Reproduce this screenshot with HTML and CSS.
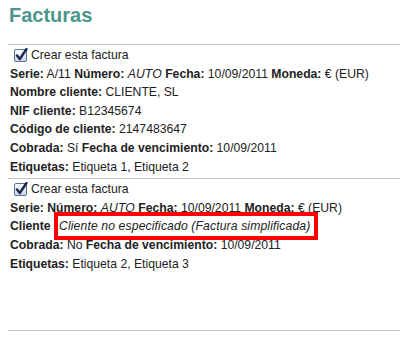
FILE: index.html
```html
<!DOCTYPE html>
<html>
<head>
<meta charset="utf-8">
<link rel="stylesheet" href="styles.css">
</head>
<body>
<div class="page">
  <h1 class="title">Facturas</h1>
  <div class="invoice">
    <div class="row check-row">
      <svg class="check" width="14" height="14" viewBox="0 0 14 14"><defs><linearGradient id="g1" x1="0" y1="0" x2="0" y2="1"><stop offset="0" stop-color="#ffffff"/><stop offset="1" stop-color="#c9d4ea"/></linearGradient></defs><rect x="0.5" y="1.5" width="12" height="12" rx="1.5" fill="url(#g1)" stroke="#5c6f94"/><path d="M3 7.5 L5.8 11 L12.5 1" fill="none" stroke="#1c2850" stroke-width="2.4" stroke-linecap="round" stroke-linejoin="round"/></svg>
      <span>Crear esta factura</span>
    </div>
    <div class="row"><b>Serie:</b> A/11 <b>Número:</b> <i>AUTO</i> <b>Fecha:</b> 10/09/2011 <b>Moneda:</b> € (EUR)</div>
    <div class="row"><b>Nombre cliente:</b> CLIENTE, SL</div>
    <div class="row"><b>NIF cliente:</b> B12345674</div>
    <div class="row"><b>Código de cliente:</b> 2147483647</div>
    <div class="row"><b>Cobrada:</b> Sí <b>Fecha de vencimiento:</b> 10/09/2011</div>
    <div class="row"><b>Etiquetas:</b> Etiqueta 1, Etiqueta 2</div>
  </div>
  <div class="invoice">
    <div class="row check-row">
      <svg class="check" width="14" height="14" viewBox="0 0 14 14"><defs><linearGradient id="g2" x1="0" y1="0" x2="0" y2="1"><stop offset="0" stop-color="#ffffff"/><stop offset="1" stop-color="#c9d4ea"/></linearGradient></defs><rect x="0.5" y="1.5" width="12" height="12" rx="1.5" fill="url(#g2)" stroke="#5c6f94"/><path d="M3 7.5 L5.8 11 L12.5 1" fill="none" stroke="#1c2850" stroke-width="2.4" stroke-linecap="round" stroke-linejoin="round"/></svg>
      <span>Crear esta factura</span>
    </div>
    <div class="row"><b>Serie:</b> <b>Número:</b> <i>AUTO</i> <b>Fecha:</b> 10/09/2011 <b>Moneda:</b> € (EUR)</div>
    <div class="row"><b>Cliente</b> <i class="highlight">Cliente no especificado (Factura simplificada)</i></div>
    <div class="row"><b>Cobrada:</b> No <b>Fecha de vencimiento:</b> 10/09/2011</div>
    <div class="row"><b>Etiquetas:</b> Etiqueta 2, Etiqueta 3</div>
  </div>
  <div class="footer-rule"></div>
</div>
</body>
</html>
```
FILE: styles.css
```css
html, body {
  margin: 0;
  padding: 0;
  background: #ffffff;
}
body {
  font-family: "Liberation Sans", Arial, sans-serif;
  font-size: 12.2px;
  color: #222222;
}
.page {
  padding: 0 0 0 8px;
}
.title {
  margin: 3px 0 0 1px;
  font-size: 20px;
  line-height: 24px;
  font-weight: bold;
  color: #4b978c;
}
.invoice {
  border-top: 1px solid #c3c6c6;
  padding: 1px 0 2px 2px;
}
.invoice:first-of-type {
  margin-top: 17px;
}
.row {
  line-height: 18.6px;
  white-space: nowrap;
}
.row b {
  color: #222222;
}
.row i {
  letter-spacing: 0.12px;
}
.check-row {
  display: flex;
  align-items: center;
  gap: 3px;
  padding-left: 4px;
}
.check {
  display: block;
}
.highlight {
  position: relative;
  margin-left: 5px;
}
.highlight::after {
  content: "";
  position: absolute;
  top: -7px;
  bottom: -7px;
  left: -5px;
  right: -8px;
  border: 4px solid #ff0000;
}
.footer-rule {
  margin-top: 55px;
  border-top: 1px solid #c3c6c6;
}
```
